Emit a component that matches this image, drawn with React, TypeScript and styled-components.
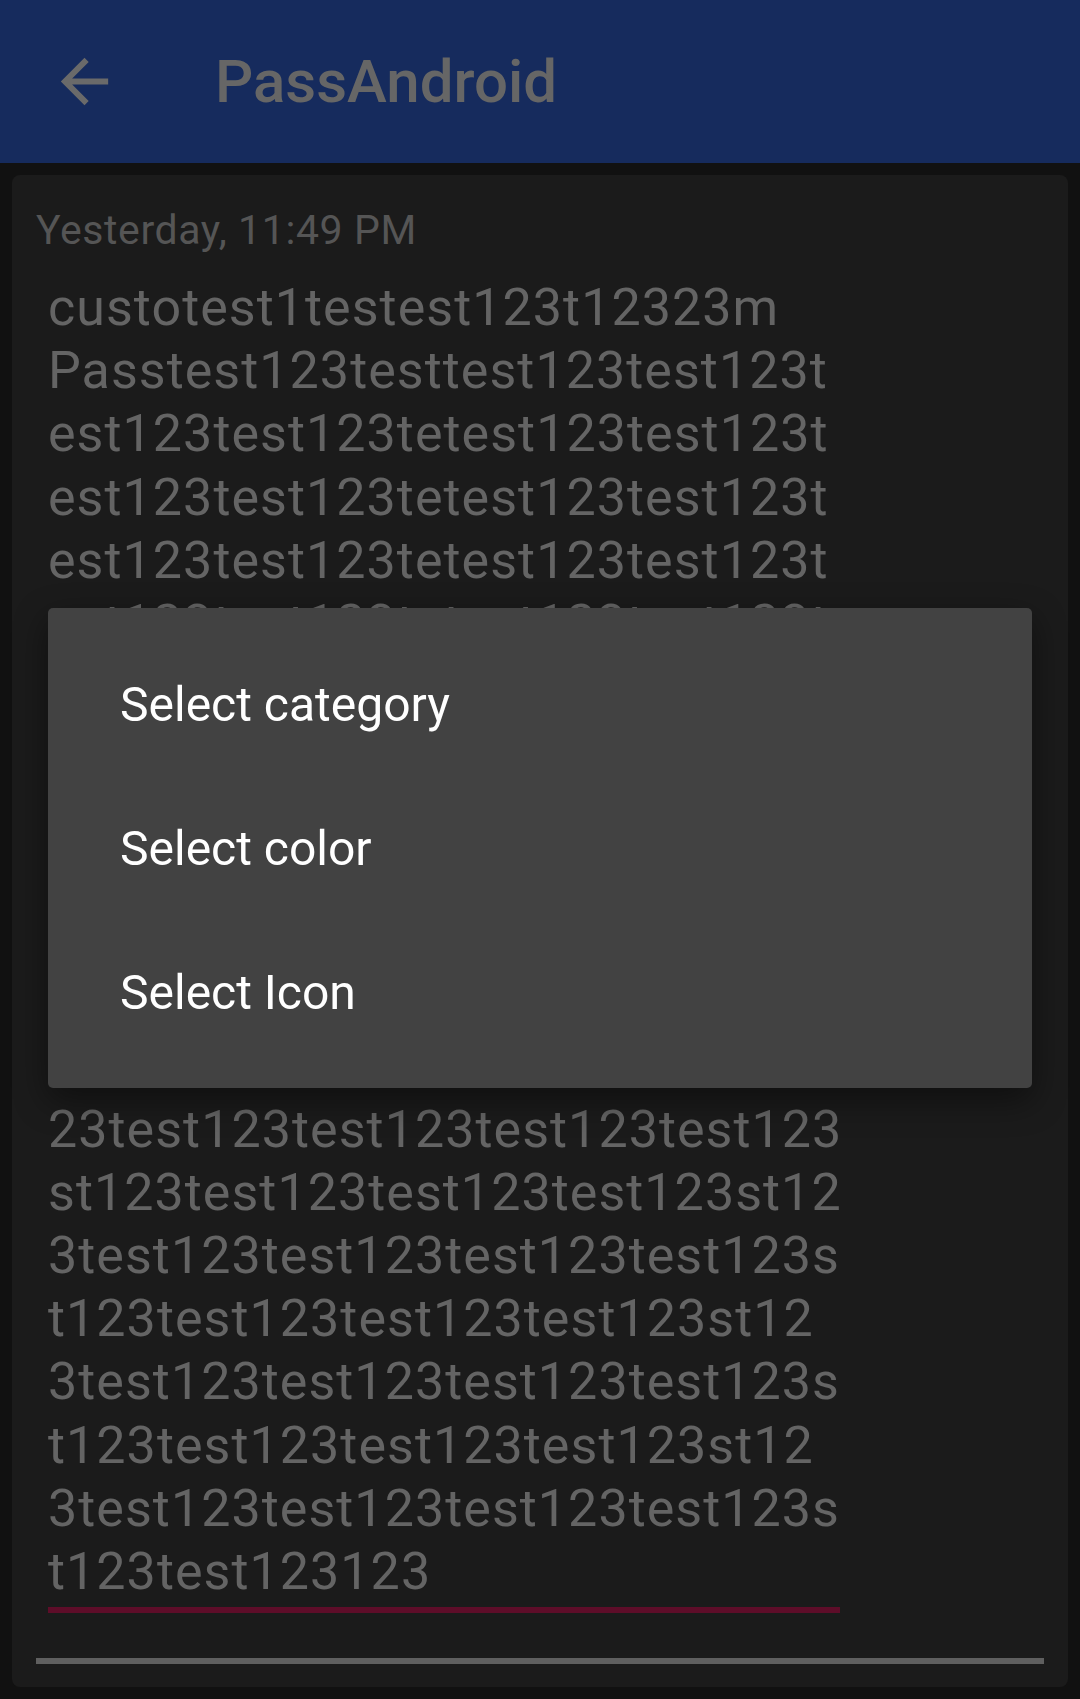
import React from "react";
import styled, { createGlobalStyle } from "styled-components";

const GlobalStyle = createGlobalStyle`
  html, body {
    margin: 0;
    padding: 0;
    background: #111111;
  }
  body {
    font-family: Roboto, "Noto Sans", "Liberation Sans", sans-serif;
    -webkit-font-smoothing: antialiased;
  }
  * { box-sizing: border-box; }
`;

const Page = styled.div`
  width: 1080px;
  height: 1699px;
  display: flex;
  flex-direction: column;
  background: #111111;
  overflow: hidden;
`;

const AppBar = styled.header`
  height: 163px;
  flex: none;
  display: flex;
  align-items: center;
  padding-left: 49px;
  background: #162b5d;
`;

const BackButton = styled.button`
  width: 71px;
  height: 71px;
  padding: 0;
  margin: 0 95px 0 0;
  border: none;
  background: transparent;
  display: flex;
  align-items: center;
  justify-content: center;
  color: #6a6a6a;
  svg { width: 71px; height: 71px; display: block; }
`;

const Title = styled.h1`
  margin: 0;
  font-family: Roboto, "Liberation Sans", sans-serif;
  font-weight: 500;
  font-size: 60px;
  color: #666666;
  letter-spacing: 0;
`;

const Content = styled.main`
  flex: 1;
  display: flex;
  padding: 12px;
`;

const Card = styled.section`
  flex: 1;
  display: flex;
  flex-direction: column;
  background: #1b1b1b;
  border-radius: 8px;
  padding: 31px 24px 0;
`;

const Timestamp = styled.div`
  font-size: 41px;
  line-height: 48px;
  letter-spacing: 0.6px;
  color: #555555;
`;

const EditField = styled.div`
  margin: 22px 12px 0;
  width: 792px;
  border-bottom: 6px solid #5e0d29;
  padding-bottom: 4px;
`;

const Line = styled.span`
  display: block;
  white-space: nowrap;
  font-size: 52px;
  line-height: 63.2px;
  letter-spacing: 1.05px;
  color: #646464;
`;

const Divider = styled.hr`
  margin: 45px 0 0;
  border: none;
  height: 6px;
  background: #5f5f5f;
`;

const Scrim = styled.div`
  position: fixed;
  inset: 0;
  display: flex;
  align-items: center;
  justify-content: center;
  padding-bottom: 4px;
`;

const Dialog = styled.div`
  width: 984px;
  background: #424242;
  border-radius: 5px;
  padding: 24px 0;
  box-shadow: 0 12px 34px rgba(0, 0, 0, 0.45);
  display: flex;
  flex-direction: column;
`;

const MenuItem = styled.div`
  height: 144px;
  display: flex;
  align-items: center;
  padding: 1px 0 0 72px;
  font-size: 48px;
  color: #ffffff;
`;

const lines = [
  "custotest1testest123t12323m",
  "Passtest123testtest123test123t",
  "est123test123tetest123test123t",
  "est123test123tetest123test123t",
  "est123test123tetest123test123t",
  "est123test123tetest123test123t",
  "est123test123tetest123test123t",
  "est123test123tetest123test123t",
  "est123test123test123test123st1",
  "23test123test123test123test123",
  "st123test123test123test123st12",
  "3test123test123test123test123s",
  "t123test123test123test123st1",
  "23test123test123test123test123",
  "st123test123test123test123st12",
  "3test123test123test123test123s",
  "t123test123test123test123st12",
  "3test123test123test123test123s",
  "t123test123test123test123st12",
  "3test123test123test123test123s",
  "t123test123123",
];

const menu = ["Select category", "Select color", "Select Icon"];

export default function App() {
  return (
    <>
      <GlobalStyle />
      <Page>
        <AppBar>
          <BackButton aria-label="Back">
            <svg viewBox="0 0 24 24" fill="currentColor">
              <path d="M20 11H7.83l5.59-5.59L12 4l-8 8 8 8 1.41-1.41L7.83 13H20v-2z" />
            </svg>
          </BackButton>
          <Title>PassAndroid</Title>
        </AppBar>
        <Content>
          <Card>
            <Timestamp>Yesterday, 11:49 PM</Timestamp>
            <EditField>
              {lines.map((l, i) => (
                <Line key={i}>{l}</Line>
              ))}
            </EditField>
            <Divider />
          </Card>
        </Content>
      </Page>
      <Scrim>
        <Dialog>
          {menu.map((m) => (
            <MenuItem key={m}>{m}</MenuItem>
          ))}
        </Dialog>
      </Scrim>
    </>
  );
}
